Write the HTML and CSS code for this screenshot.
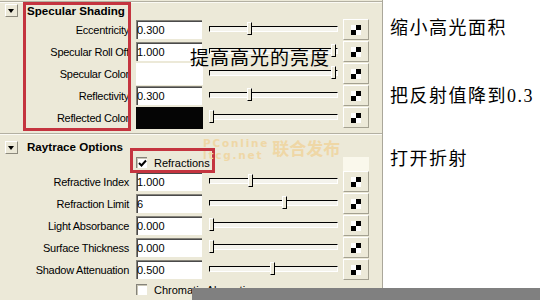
FILE: index.html
```html
<!DOCTYPE html>
<html lang="zh">
<head>
<meta charset="utf-8">
<title>Maya Attribute Editor</title>
<link rel="stylesheet" href="styles.css">
</head>
<body>
<div class="screen">
  <div class="panel">
    <section class="frame first">
      <div class="head"><span class="arrow"></span><span class="title">Specular Shading</span></div>
      <div class="row">
        <label>Eccentricity</label>
        <span class="field">0.300</span>
        <span class="slider"><i class="thumb" style="--v:0.31"></i></span>
        <span class="btn"><i class="chk"></i></span>
      </div>
      <div class="row">
        <label>Specular Roll Off</label>
        <span class="field">1.000</span>
        <span class="slider"><i class="thumb" style="--v:1"></i></span>
        <span class="btn"><i class="chk"></i></span>
      </div>
      <div class="row">
        <label>Specular Color</label>
        <span class="swatch white"></span>
        <span class="slider"><i class="thumb" style="--v:1"></i></span>
        <span class="btn"><i class="chk"></i></span>
      </div>
      <div class="row">
        <label>Reflectivity</label>
        <span class="field">0.300</span>
        <span class="slider"><i class="thumb" style="--v:0.31"></i></span>
        <span class="btn"><i class="chk"></i></span>
      </div>
      <div class="row">
        <label>Reflected Color</label>
        <span class="swatch black"></span>
        <span class="slider"><i class="thumb" style="--v:0"></i></span>
        <span class="btn"><i class="chk"></i></span>
      </div>
    </section>

    <section class="frame second">
      <div class="head low"><span class="arrow"></span><span class="title">Raytrace Options</span></div>
      <div class="row check-row">
        <span></span>
        <span class="check-item"><span class="box checked"><svg viewBox="0 0 9 9" width="9" height="9"><polyline points="1,4 3.5,6.5 8,1.5" fill="none" stroke="#000" stroke-width="2"/></svg></span>Refractions</span>
        <span class="pale"></span>
      </div>
      <div class="row">
        <label>Refractive Index</label>
        <span class="field">1.000</span>
        <span class="slider"><i class="thumb" style="--v:0.32"></i></span>
        <span class="btn"><i class="chk"></i></span>
      </div>
      <div class="row">
        <label>Refraction Limit</label>
        <span class="field">6</span>
        <span class="slider"><i class="thumb" style="--v:0.6"></i></span>
        <span class="btn"><i class="chk"></i></span>
      </div>
      <div class="row">
        <label>Light Absorbance</label>
        <span class="field">0.000</span>
        <span class="slider"><i class="thumb" style="--v:0"></i></span>
        <span class="btn"><i class="chk"></i></span>
      </div>
      <div class="row">
        <label>Surface Thickness</label>
        <span class="field">0.000</span>
        <span class="slider"><i class="thumb" style="--v:0"></i></span>
        <span class="btn"><i class="chk"></i></span>
      </div>
      <div class="row">
        <label>Shadow Attenuation</label>
        <span class="field">0.500</span>
        <span class="slider"><i class="thumb" style="--v:0.5"></i></span>
        <span class="btn"><i class="chk"></i></span>
      </div>
      <div class="row check-row">
        <span></span>
        <span class="check-item"><span class="box"></span>Chromatic Aberration</span>
      </div>
    </section>

    <div class="redbox r1"></div>
    <div class="redbox r2"></div>
    <div class="overlay-note">提高高光的亮度</div>
    <div class="watermark">
      <span class="wm-latin"><span class="wm-line">PConline</span><span class="wm-line">ltcg.net</span></span>
      <span class="wm-cjk">联合发布</span>
    </div>
  </div>

  <div class="notes">
    <p class="note n1">缩小高光面积</p>
    <p class="note n2">把反射值降到0.3</p>
    <p class="note n3">打开折射</p>
  </div>

  <div class="graybar"></div>
</div>
</body>
</html>
```

FILE: styles.css
```css
* { box-sizing: border-box; }

html, body {
  margin: 0;
  padding: 0;
}

body {
  width: 540px;
  height: 300px;
  overflow: hidden;
  background: #fff;
  color: #000;
  font-family: "Liberation Sans", Arial, sans-serif;
  font-size: 11px;
}

.screen {
  position: relative;
  display: flex;
  width: 540px;
  height: 300px;
}

/* ---------- attribute panel ---------- */
.panel {
  position: relative;
  flex: 0 0 383px;
  height: 300px;
  background: #ece9d8;
  border-right: 1px solid #aaa79a;
}

.frame {
  border-top: 1px solid #b3b0a2;
  box-shadow: inset 0 1px 0 #fbfaf4;
}

.frame.first { margin-top: 1px; }
.frame.second { margin-top: 4px; }

.head {
  display: flex;
  align-items: center;
  height: 17px;
}

.head.low {
  height: 20px;
  align-items: flex-end;
}

.arrow {
  position: relative;
  flex: 0 0 13px;
  width: 13px;
  height: 13px;
  margin-left: 5px;
  border: 1px solid;
  border-color: #fff #8d8a7d #8d8a7d #fff;
}

.arrow::after {
  content: "";
  position: absolute;
  left: 2px;
  top: 4px;
  border-left: 3.5px solid transparent;
  border-right: 3.5px solid transparent;
  border-top: 4px solid #000;
}

.title {
  margin-left: 9px;
  font-weight: bold;
  font-size: 11.6px;
  line-height: 14px;
}

.row {
  display: grid;
  grid-template-columns: 136px 67px 140px 26px;
  height: 22px;
  align-items: start;
}

.row label {
  padding-right: 7px;
  text-align: right;
  line-height: 22px;
  white-space: nowrap;
  letter-spacing: -0.25px;
}

.field {
  margin-top: 1px;
  width: 66px;
  height: 19px;
  padding: 3px 0 0 0;
  background: #fff;
  border-top: 1px solid #85837a;
  border-left: 1px solid #85837a;
  box-shadow: inset 1px 1px 0 #4a4a4a;
  line-height: 13px;
}

.swatch {
  width: 67px;
  height: 22px;
}
.swatch.white { background: #fff; }
.swatch.black { background: #050505; }

.slider {
  position: relative;
  margin-left: 6px;
  width: 129px;
  height: 22px;
}

.slider::before {
  content: "";
  position: absolute;
  left: 0;
  right: 0;
  top: 7px;
  height: 4px;
  border-top: 1px solid #000;
  border-left: 1px solid #000;
  border-bottom: 1px solid #fff;
  border-right: 1px solid #fff;
  background: #f4f3ec;
}

.thumb {
  position: absolute;
  top: 3px;
  left: calc(var(--v) * 122px);
  width: 5px;
  height: 13px;
  background: #ece9d8;
  border: 1px solid;
  border-color: #fff #000 #000 #fff;
}

.btn {
  display: flex;
  align-items: center;
  justify-content: center;
  width: 26px;
  height: 21px;
  border: 1px solid;
  border-color: #fff #a4a191 #a4a191 #fff;
  background: #ece9d8;
}

.chk {
  display: block;
  width: 10px;
  height: 10px;
  background: conic-gradient(#000 0 25%, #fff 0 50%, #000 0 75%, #fff 0);
}

/* checkbox rows */
.check-row {
  height: 17px;
}

.check-row .check-item {
  grid-column: 2 / 4;
  display: flex;
  align-items: center;
  gap: 7px;
  height: 17px;
  white-space: nowrap;
}

.box {
  display: flex;
  align-items: center;
  justify-content: center;
  width: 11px;
  height: 11px;
  background: #fff;
  border-top: 1px solid #85837a;
  border-left: 1px solid #85837a;
  box-shadow: inset 1px 1px 0 #c9c6b6;
}

.box.checked svg { display: block; }

.pale {
  grid-column: 4;
  width: 26px;
  height: 14px;
  margin-top: 3px;
  background: #faf8ec;
}

/* ---------- overlays ---------- */
.redbox {
  position: absolute;
  border: 3px solid #c4343f;
}

.r1 { left: 23px; top: 2px; width: 108px; height: 129px; }
.r2 { left: 130px; top: 148px; width: 85px; height: 25px; }

.overlay-note {
  position: absolute;
  left: 190px;
  top: 47px;
  font-family: "Liberation Serif", "Noto Sans CJK SC", serif;
  font-size: 19px;
  line-height: 24px;
  letter-spacing: 1px;
  color: #000;
  white-space: nowrap;
}

.watermark {
  position: absolute;
  left: 203px;
  top: 137px;
  display: flex;
  align-items: flex-start;
  gap: 3px;
  color: #efd7a6;
  font-weight: bold;
  white-space: nowrap;
}

.wm-latin {
  display: flex;
  flex-direction: column;
  font-family: "DejaVu Sans", sans-serif;
  font-size: 10.5px;
  line-height: 12px;
  letter-spacing: 1.8px;
}

.wm-cjk {
  font-family: "Noto Sans CJK SC", sans-serif;
  font-size: 17px;
  line-height: 22px;
  margin-top: 0;
}

/* ---------- right side notes ---------- */
.notes {
  flex: 1;
  padding-left: 7px;
  background: #fff;
}

.note {
  margin: 0;
  font-family: "Liberation Serif", "Noto Sans CJK SC", serif;
  font-size: 18px;
  line-height: 20px;
  letter-spacing: 1.5px;
  white-space: nowrap;
}

.n1 { margin-top: 18px; }
.n2 { margin-top: 48px; }
.n3 { margin-top: 43px; }

.graybar {
  position: absolute;
  left: 192px;
  top: 288px;
  right: 0;
  bottom: 0;
  background: #808080;
}
```
